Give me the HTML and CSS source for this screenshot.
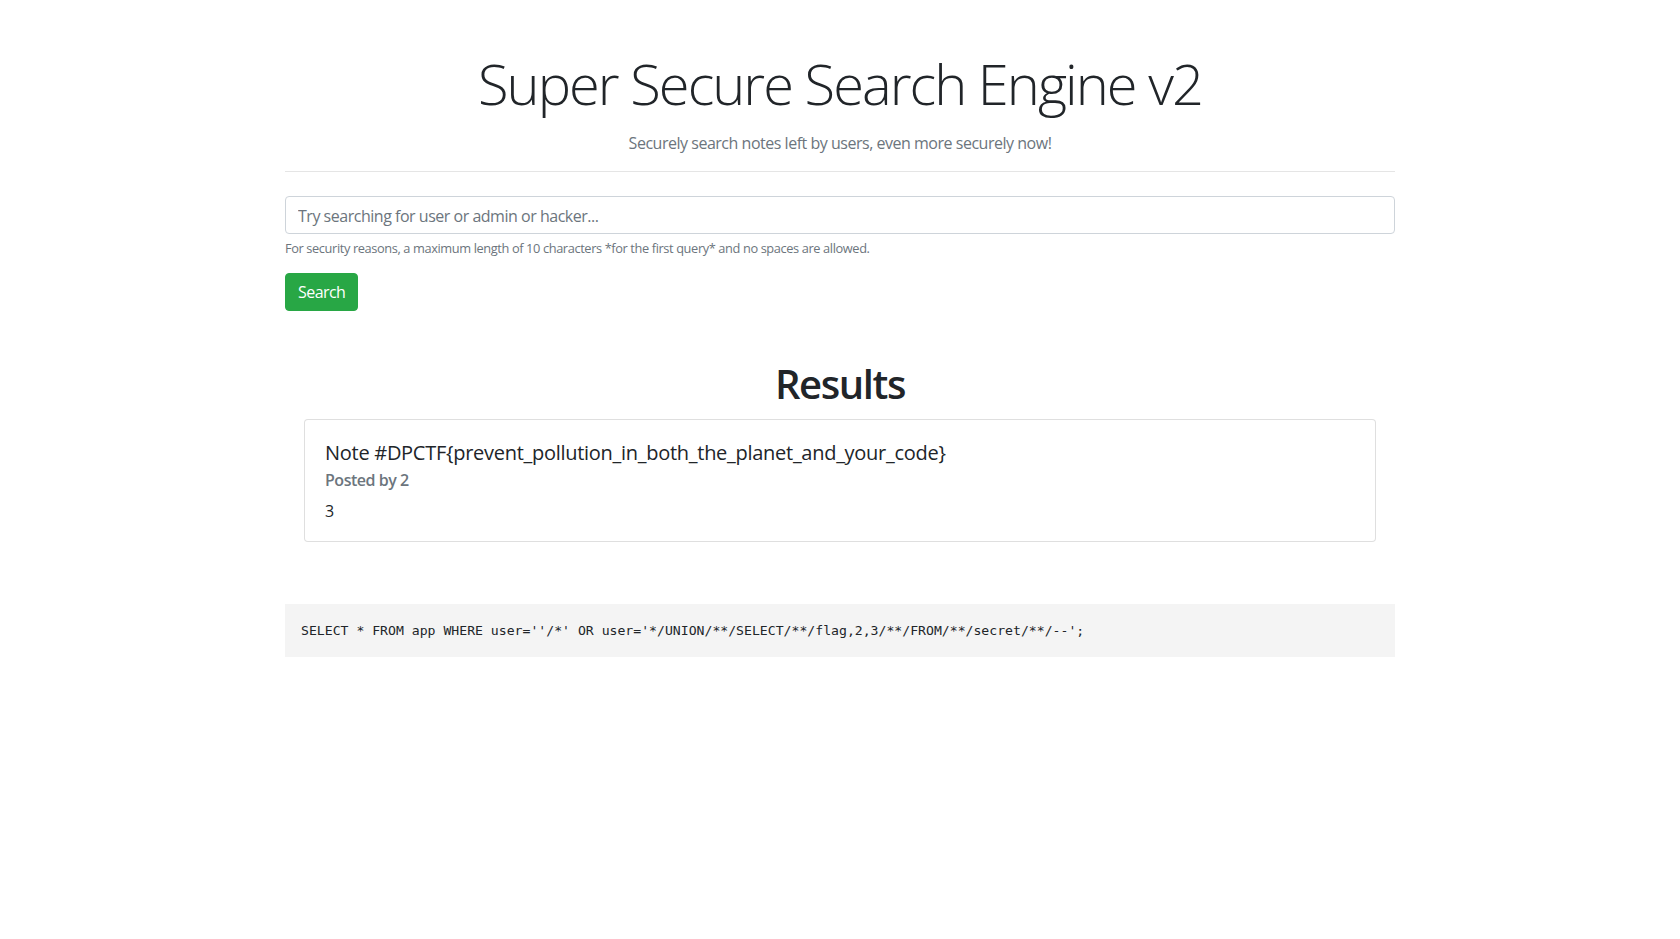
FILE: index.html
```html
<!DOCTYPE html>
<html lang="en">
<head>
<meta charset="utf-8">
<title>Super Secure Search Engine v2</title>
<link rel="stylesheet" href="styles.css">
</head>
<body>
<div class="container">
  <header class="hero">
    <h1 class="hero-title">Super Secure Search Engine v2</h1>
    <p class="hero-lead">Securely search notes left by users, even more securely now!</p>
  </header>
  <hr class="divider">
  <form class="search-form">
    <div class="form-group">
      <input class="form-control" type="text" placeholder="Try searching for user or admin or hacker...">
      <small class="form-text">For security reasons, a maximum length of 10 characters *for the first query* and no spaces are allowed.</small>
    </div>
    <button class="btn-search" type="button">Search</button>
  </form>
  <section class="results">
    <h1 class="results-title">Results</h1>
    <div class="card">
      <div class="card-body">
        <h5 class="card-title">Note #DPCTF{prevent_pollution_in_both_the_planet_and_your_code}</h5>
        <h6 class="card-subtitle">Posted by 2</h6>
        <p class="card-text">3</p>
      </div>
    </div>
  </section>
  <pre class="query">SELECT * FROM app WHERE user=''/*' OR user='*/UNION/**/SELECT/**/flag,2,3/**/FROM/**/secret/**/--';</pre>
</div>
</body>
</html>
```
FILE: styles.css
```css
* { box-sizing: border-box; }

html, body {
  margin: 0;
  padding: 0;
  background: #fff;
}

body {
  font-family: "Open Sans", "Noto Sans", sans-serif;
  font-size: 16px;
  line-height: 1.5;
  color: #212529;
}

.container {
  width: 1140px;
  margin: 0 auto;
  padding: 0 15px;
}

.hero {
  padding-top: 50px;
  text-align: center;
}

.hero-title {
  margin: 0;
  font-size: 56px;
  font-weight: 300;
  line-height: 1.2;
  letter-spacing: -0.035em;
}

.hero-lead {
  margin: 14px 0 0;
  font-size: 16px;
  line-height: 24px;
  color: #6c757d;
  letter-spacing: -0.03em;
}

.divider {
  margin: 16px 0 0;
  border: 0;
  border-top: 1px solid rgba(0, 0, 0, 0.1);
  height: 0;
}

.search-form {
  margin-top: 24px;
}

.form-group {
  margin-bottom: 15px;
}

.form-control {
  display: block;
  width: 100%;
  height: 38px;
  padding: 7px 12px 5px;
  font-family: inherit;
  font-size: 16px;
  line-height: 24px;
  color: #495057;
  background: #fff;
  border: 1px solid #ced4da;
  border-radius: 4px;
  outline: none;
  letter-spacing: -0.03em;
}

.form-control::placeholder {
  color: #6c757d;
  opacity: 1;
}

.form-text {
  display: block;
  margin-top: 5px;
  font-size: 12.8px;
  line-height: 19.2px;
  color: #6c757d;
  letter-spacing: -0.03em;
}

.btn-search {
  display: block;
  height: 38px;
  padding: 6px 12px;
  font-family: inherit;
  font-size: 16px;
  line-height: 24px;
  color: #fff;
  background: #28a745;
  border: 1px solid #28a745;
  border-radius: 4px;
  letter-spacing: -0.035em;
  cursor: pointer;
}

.results {
  margin-top: 49px;
}

.results-title {
  margin: 0 0 11px;
  text-align: center;
  font-size: 40px;
  font-weight: 600;
  line-height: 48px;
  letter-spacing: -0.035em;
}

.card {
  margin: 0 19px;
  border: 1px solid rgba(0, 0, 0, 0.125);
  border-radius: 4px;
  background: #fff;
}

.card-body {
  padding: 21px 20px 18px;
}

.card-title {
  margin: 0 0 12px;
  font-size: 20px;
  font-weight: 500;
  line-height: 24px;
  letter-spacing: -0.014em;
}

.card-subtitle {
  margin: -6px 0 8px;
  font-size: 16px;
  font-weight: 600;
  line-height: 19.2px;
  color: #6c757d;
  letter-spacing: -0.03em;
}

.card-text {
  margin: 0;
  font-size: 16px;
  line-height: 24px;
}

.query {
  margin: 62px 0 16px;
  padding: 16px;
  background: #f4f4f4;
  font-family: "DejaVu Sans Mono", "Liberation Mono", monospace;
  font-size: 13.15px;
  line-height: 21px;
  color: #212529;
  white-space: pre;
  overflow: hidden;
}
```
